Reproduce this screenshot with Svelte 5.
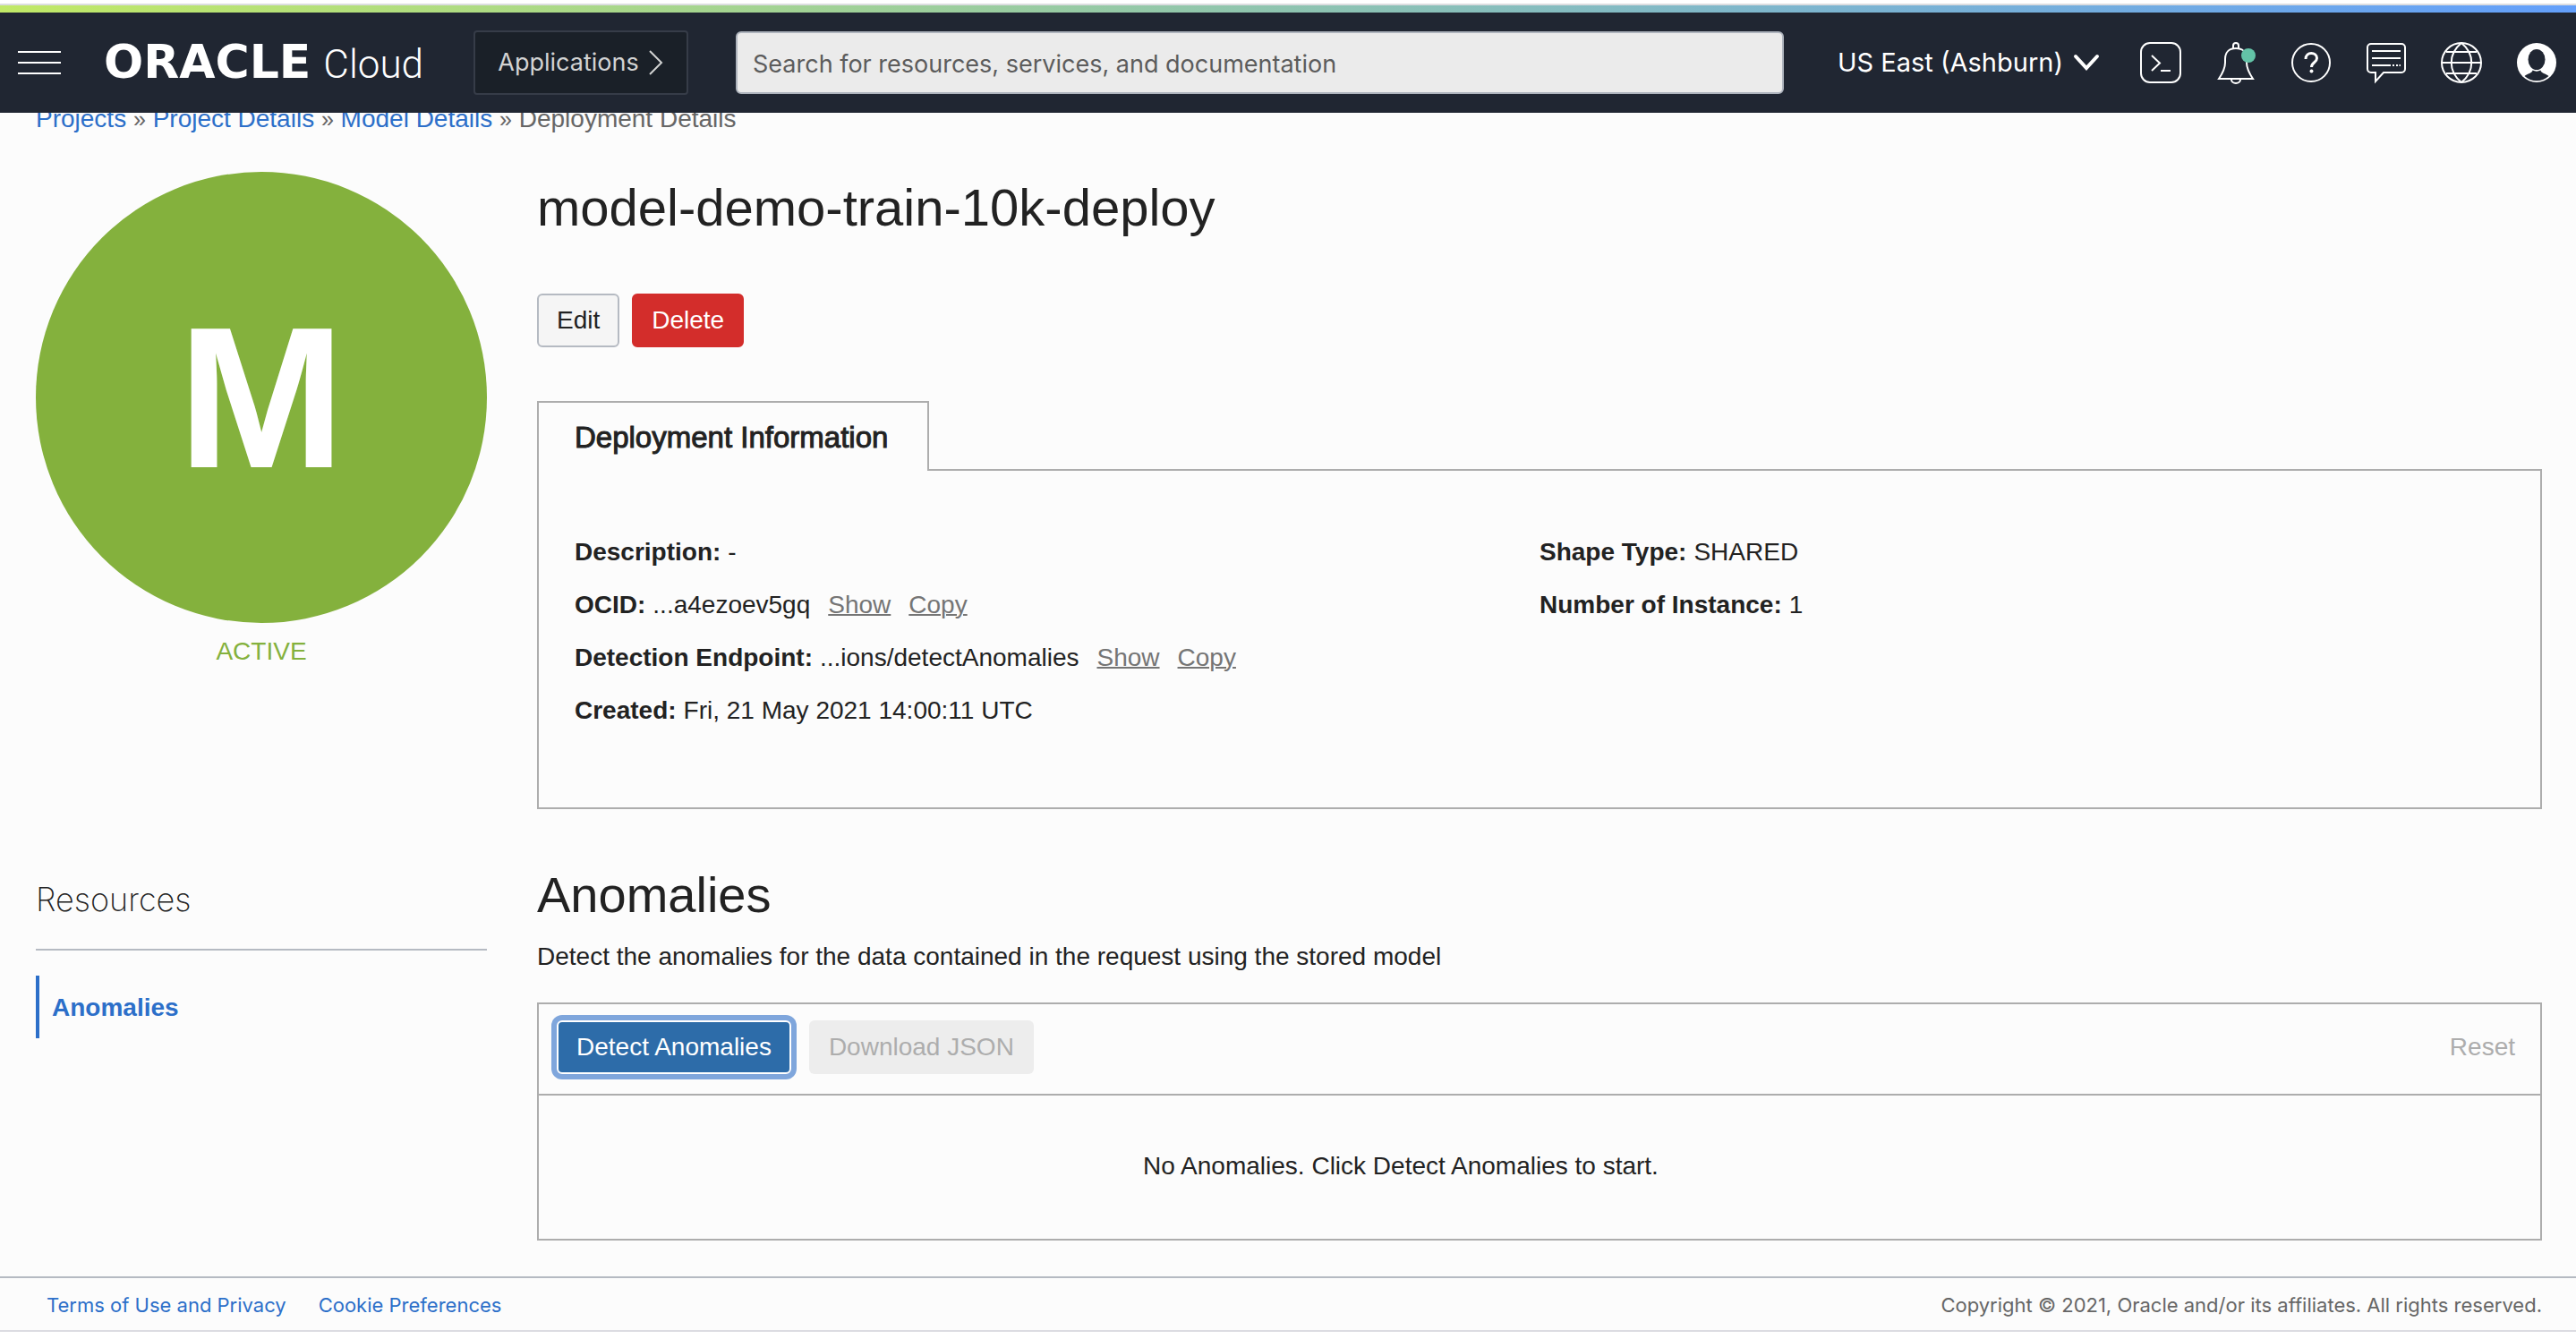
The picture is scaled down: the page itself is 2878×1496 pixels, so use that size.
<script>
  const crumbs = ['Projects', 'Project Details', 'Model Details'];
  const details = [
    { label: 'Description:', value: '-' },
    { label: 'OCID:', value: '...a4ezoev5gq', actions: ['Show', 'Copy'] },
    { label: 'Detection Endpoint:', value: '...ions/detectAnomalies', actions: ['Show', 'Copy'] },
    { label: 'Created:', value: 'Fri, 21 May 2021 14:00:11 UTC' },
  ];
  const shape = [
    { label: 'Shape Type:', value: 'SHARED' },
    { label: 'Number of Instance:', value: '1' },
  ];
</script>

{#snippet rows(items)}
  <dl class="rows">
    {#each items as item}
      <div class="row">
        <dt>{item.label}</dt>
        <dd>
          <span>{item.value}</span>
          {#each item.actions ?? [] as action}
            <a class="action" href="#{action.toLowerCase()}">{action}</a>
          {/each}
        </dd>
      </div>
    {/each}
  </dl>
{/snippet}

<div class="edge"></div>
<header class="topbar">
  <button class="icon menu" aria-label="Navigation menu">
    <svg width="48" height="26" viewBox="0 0 48 26"><path d="M0 1H48M0 13H48M0 25H48" /></svg>
  </button>
  <a class="brand" href="#home"><span class="oracle">ORACLE</span><span class="cloud">Cloud</span></a>
  <button class="apps">
    Applications
    <svg width="18" height="30" viewBox="0 0 18 30"><path d="M2 2L15 15L2 28" /></svg>
  </button>
  <input class="search" type="search" aria-label="Search" placeholder="Search for resources, services, and documentation" />
  <button class="region">
    US East (Ashburn)
    <svg width="28" height="18" viewBox="0 0 28 18"><path d="M2 2L14 15L26 2" /></svg>
  </button>
  <nav class="tools" aria-label="Tools">
    <button class="icon" aria-label="Cloud Shell">
      <svg width="48" height="48" viewBox="0 0 48 48">
        <rect x="2" y="2" width="44" height="44" rx="10" />
        <path d="M14 16L23 24.500L14 33M24 33H35" />
      </svg>
    </button>
    <button class="icon" aria-label="Notifications">
      <svg width="48" height="48" viewBox="0 0 48 48">
        <path d="M5 42C9 36 12 31 12 24V20C12 12 17 8 24 8C31 8 36 12 36 20V24C36 31 39 36 43 42Z" />
        <path d="M21 8V5A3 3 0 0 1 27 5V8M19 43A5 4 0 0 0 29 43" />
        <circle class="dot" cx="38" cy="16" r="8" />
      </svg>
    </button>
    <button class="icon" aria-label="Help">
      <svg width="48" height="48" viewBox="0 0 48 48">
        <circle cx="24" cy="24" r="21" />
        <path class="thick" d="M18 20C18 11 30.500 12 30.500 19C30.500 24 24.500 23.500 24.500 29" />
        <circle class="fill" cx="24.500" cy="33.500" r="2" />
      </svg>
    </button>
    <button class="icon" aria-label="Announcements">
      <svg width="48" height="48" viewBox="0 0 48 48">
        <path d="M7 3H41A4 4 0 0 1 45 7V31A4 4 0 0 1 41 35H21L12 45V35H7A4 4 0 0 1 3 31V7A4 4 0 0 1 7 3Z" />
        <path d="M8 11H40M8 19H40M8 27H29" />
        <path d="M31 27H33M35 27H37M38.500 27H40" />
      </svg>
    </button>
    <button class="icon" aria-label="Language">
      <svg width="48" height="48" viewBox="0 0 48 48">
        <circle cx="24" cy="24" r="22" />
        <path d="M24 2C9 14 9 34 24 46M24 2C39 14 39 34 24 46M7 12H41M2 24H46M7 36H41" />
      </svg>
    </button>
    <button class="icon" aria-label="Profile">
      <svg width="48" height="48" viewBox="0 0 48 48">
        <circle class="fill" cx="24" cy="24" r="22" />
        <ellipse class="hole" cx="24" cy="20.500" rx="9.500" ry="11.500" />
        <path class="hole" d="M10.500 39C14 36 19 36 19.500 32.500C22 34 26 34 28.500 32.500C29 36 34 36 37.500 39C30 46 18 46 10.500 39Z" />
      </svg>
    </button>
  </nav>
</header>

<main>
  <nav class="crumbs" aria-label="Breadcrumb">
    {#each crumbs as crumb}
      <a href="#{crumb.replace(' ', '-').toLowerCase()}">{crumb}</a> <span class="sep">»</span>{' '}
    {/each}
    <span>Deployment Details</span>
  </nav>

  <div class="layout">
    <aside class="status">
      <div class="badge">M</div>
      <p>ACTIVE</p>
    </aside>

    <section class="summary">
      <h1>model-demo-train-10k-deploy</h1>
      <div class="buttons">
        <button class="btn plain">Edit</button>
        <button class="btn danger">Delete</button>
      </div>
      <div role="tablist"><button class="tab" role="tab" aria-selected="true">Deployment Information</button></div>
      <div class="panel" role="tabpanel">
        {@render rows(details)}
        {@render rows(shape)}
      </div>
    </section>

    <aside class="resources">
      <h2>Resources</h2>
      <a href="#anomalies">Anomalies</a>
    </aside>

    <section id="anomalies">
      <h2 class="heading">Anomalies</h2>
      <p class="lead">Detect the anomalies for the data contained in the request using the stored model</p>
      <div class="box">
        <div class="toolbar">
          <button class="btn primary">Detect Anomalies</button>
          <button class="btn off" disabled>Download JSON</button>
          <button class="reset" disabled>Reset</button>
        </div>
        <p class="empty">No Anomalies. Click Detect Anomalies to start.</p>
      </div>
    </section>
  </div>
</main>

<footer>
  <a href="#terms">Terms of Use and Privacy</a>
  <a href="#cookies">Cookie Preferences</a>
  <span>Copyright © 2021, Oracle and/or its affiliates. All rights reserved.</span>
</footer>

<style>
  :global(body) {
    margin: 0;
    background: #ffffff;
    color: #222222;
    font: 28px/32px 'Liberation Sans', Arial, sans-serif;
  }
  h1, h2, p, dl, dd { margin: 0; }
  button, input { font: inherit; color: inherit; box-sizing: border-box; }
  button { padding: 0; border: 0; background: none; }
  a { color: #2c6fc9; text-decoration: none; }
  svg { display: block; fill: none; stroke: #ffffff; stroke-width: 2; overflow: visible; }

  .edge { height: 4px; border-bottom: 2px solid #dcdde0; }
  .topbar {
    position: relative;
    z-index: 1;
    display: flex;
    align-items: center;
    height: 112px;
    padding: 0 20px;
    border-top: 8px solid;
    border-image: linear-gradient(90deg, #c1e967, #8ec4b0 50%, #639ffb) 1;
    background: #202632;
    background-clip: padding-box;
    color: #ffffff;
    font-family: Inter, sans-serif;
    font-size: 27px;
  }
  .brand {
    display: flex;
    align-items: baseline;
    gap: 14px;
    width: 361px;
    margin-left: 48px;
    margin-right: 52px;
    color: #ffffff;
    line-height: 56px;
  }
  .oracle { font-family: 'DejaVu Sans', sans-serif; font-weight: 700; font-size: 52px; }
  .cloud { font-family: Roboto, sans-serif; font-weight: 300; font-size: 44px; }
  .apps {
    display: flex;
    align-items: center;
    justify-content: center;
    gap: 10px;
    width: 240px;
    height: 72px;
    border: 2px solid #363c48;
    border-radius: 4px;
    background: #1a2028;
    color: #d2d3d3;
  }
  .apps svg { stroke: #d2d3d3; }
  .search {
    flex: 1;
    min-width: 200px;
    height: 70px;
    margin: 0 60px 0 53px;
    padding: 2px 17px 0;
    border: 2px solid #aeb4bd;
    border-radius: 6px;
    background: #ebebeb;
  }
  .search::placeholder { color: #5c5c5c; opacity: 1; }
  .region { display: flex; align-items: center; gap: 12px; margin-right: 45px; font-size: 29px; }
  .region svg { stroke-width: 4; stroke-linecap: round; }
  .tools { display: flex; gap: 36px; }
  .tools .thick { stroke-width: 3; }
  .tools .fill { fill: #ffffff; stroke: none; }
  .tools .hole { fill: #202632; stroke: none; }
  .tools .dot { fill: #63c3a7; stroke: none; }

  main { padding: 0 38px 40px 40px; background: #fcfcfc; }
  .crumbs { margin-top: -9px; color: #666666; }
  .sep { font-size: 25px; line-height: 24px; }
  .layout {
    display: grid;
    grid-template-columns: 504px minmax(0, 1fr);
    gap: 64px 56px;
    padding-top: 43px;
  }
  .badge {
    display: flex;
    align-items: center;
    justify-content: center;
    aspect-ratio: 1;
    border-radius: 50%;
    background: #84b13d;
    color: #ffffff;
    font-weight: 700;
    font-size: 224px;
  }
  .status p { margin-top: 16px; color: #84b13d; text-align: center; }
  h1 { font-weight: 400; font-size: 58px; line-height: 64px; }
  .heading { font-weight: 400; font-size: 56px; line-height: 64px; }
  .summary { padding-top: 8px; }
  .buttons { display: flex; gap: 14px; margin: 64px 0 60px; }
  .btn { height: 60px; padding: 0 20px; border: 2px solid transparent; border-radius: 6px; }
  .plain { border-color: #b5bac2; background: #f5f5f5; }
  .danger { border-color: #d32d2b; background: #d32d2b; color: #ffffff; }
  .tab {
    position: relative;
    display: block;
    margin-bottom: -2px;
    padding: 19px 44px 17px 40px;
    border: 2px solid #adadad;
    border-bottom: 0;
    background: #fcfcfc;
    font-size: 33px;
    line-height: 40px;
    -webkit-text-stroke: 1px currentColor;
  }
  .panel {
    display: grid;
    grid-template-columns: 1fr 1fr;
    padding: 75px 40px 92px;
    border: 2px solid #adadad;
  }
  .rows { display: grid; gap: 27px; align-content: start; }
  .row { display: flex; gap: 8px; }
  dt { font-weight: 700; }
  dd { display: flex; gap: 20px; }
  .action { color: #757575; text-decoration: underline; text-decoration-thickness: 2px; }

  .resources { padding-top: 15px; }
  .resources h2 {
    padding-bottom: 33px;
    border-bottom: 2px solid #b5bac2;
    font-family: Inter, sans-serif;
    font-weight: 200;
    font-size: 36px;
    line-height: 44px;
  }
  .resources a {
    display: block;
    margin-top: 28px;
    padding: 20px 14px 18px;
    border-left: 4px solid #2c6fc9;
    font-weight: 700;
  }
  .lead { margin: 21px 0 35px; }
  .box { border: 2px solid #adadad; }
  .toolbar { display: flex; align-items: center; gap: 20px; padding: 18px 28px 22px 20px; border-bottom: 2px solid #adadad; }
  .primary { border-color: #ffffff; background: #2d6ca9; color: #ffffff; box-shadow: 0 0 0 6px #7fa6dc; }
  .off { background: #ededed; color: #adadad; }
  .reset { margin-left: auto; color: #adadad; }
  .empty { padding: 63px 310px 65px 0; text-align: center; }

  footer {
    display: flex;
    align-items: center;
    gap: 36px;
    padding: 14px 38px 12px 52px;
    border-top: 2px solid #b5bac2;
    border-bottom: 2px solid #dcdce2;
    background: #fcfcfc;
    color: #666666;
    font-family: Inter, sans-serif;
    font-size: 22px;
  }
  footer span { margin-left: auto; }
</style>
